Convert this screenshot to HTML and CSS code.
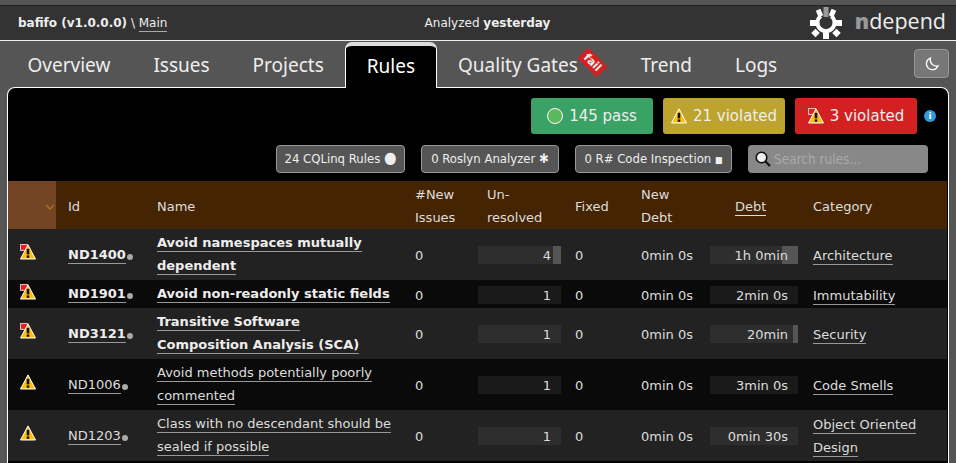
FILE: index.html
```html
<!DOCTYPE html>
<html lang="en">
<head>
    <meta charset="UTF-8">
    <meta name="viewport" content="width=device-width, initial-scale=1.0">
    <title>bafifo - Rules</title>
    <link rel="stylesheet" href="styles.css">
</head>
<body>
    <svg class="defs" width="0" height="0">
        <symbol id="warn" viewBox="0 0 16 16">
            <path d="M8 0.9 L15.5 15 H0.5 Z" fill="#ffc107" stroke="#fff" stroke-width="1" stroke-linejoin="round"/>
            <rect x="6.7" y="4.8" width="2.6" height="5.6" fill="#111"/>
            <rect x="6.7" y="11.4" width="2.6" height="2.4" fill="#111"/>
        </symbol>
        <symbol id="warn-flag" viewBox="0 0 16 16">
            <path d="M0.4 0.4 H7.6 V6.4 L0.4 6.4 Z" fill="#ee1c25" stroke="#fff" stroke-width="0.8"/>
            <path d="M8 0.9 L15.5 15 H0.5 Z" fill="#ffc107" stroke="#fff" stroke-width="1" stroke-linejoin="round"/>
            <rect x="6.7" y="4.8" width="2.6" height="5.6" fill="#111"/>
            <rect x="6.7" y="11.4" width="2.6" height="2.4" fill="#111"/>
        </symbol>
    </svg>

    <header class="topbar">
        <div class="project"><b>bafifo (v1.0.0.0)</b> \ <a href="#">Main</a></div>
        <div class="analyzed">Analyzed <b>yesterday</b></div>
        <div class="logo">
            <svg width="32" height="32" viewBox="1 0 32 32">
                <g fill="#fff">
                    <path d="M10.6 7.4 A10.5 10.5 0 1 0 23.4 7.4 L20.96 10.57 A6.5 6.5 0 1 1 13.04 10.57 Z"/>
                    <rect x="8" y="2.5" width="5" height="7" transform="rotate(-24 10.5 6)"/>
                    <rect x="21" y="2.5" width="5" height="7" transform="rotate(24 23.5 6)"/>
                    <rect x="0.5" y="13" width="7" height="6"/>
                    <rect x="26.5" y="13" width="7" height="6"/>
                    <rect x="3.5" y="23" width="6" height="6" transform="rotate(-45 6.5 26)"/>
                    <rect x="24.5" y="23" width="6" height="6" transform="rotate(45 27.5 26)"/>
                    <rect x="14" y="26" width="6" height="6"/>
                </g>
                <rect x="14.5" y="0" width="5" height="10" fill="#999"/>
            </svg>
            <span class="logo-text"><span class="logo-n">n</span>depend</span>
        </div>
    </header>

    <nav class="tabs">
        <a class="tab" href="#">Overview</a>
        <a class="tab" href="#">Issues</a>
        <a class="tab" href="#">Projects</a>
        <a class="tab active" href="#">Rules</a>
        <a class="tab gates" href="#">Quality Gates<span class="ribbon">fail</span></a>
        <a class="tab" href="#">Trend</a>
        <a class="tab" href="#">Logs</a>
        <button class="theme" type="button">
            <svg width="16" height="16" viewBox="0 0 16 16"><path d="M6.5 2 A6 6 0 1 0 14 9.8 A6.2 6.2 0 0 1 6.5 2 Z" fill="none" stroke="#fff" stroke-width="1.3"/></svg>
        </button>
    </nav>

    <main class="panel">
        <div class="status-row">
            <a class="status pass" href="#"><span class="dot-pass"></span>145 pass</a>
            <a class="status warned" href="#"><svg width="16" height="16"><use href="#warn"/></svg>21 violated</a>
            <a class="status failed" href="#"><svg width="16" height="16"><use href="#warn-flag"/></svg>3 violated</a>
            <span class="info">i</span>
        </div>
        <div class="filter-row">
            <button class="filter f-cqlinq" type="button">24 CQLinq Rules <span class="mark big">●</span></button>
            <button class="filter f-roslyn" type="button">0 Roslyn Analyzer <span class="mark">✱</span></button>
            <button class="filter f-resharper" type="button">0 R# Code Inspection <span class="mark small">■</span></button>
            <label class="search">
                <svg width="18" height="18" viewBox="0 0 18 18"><circle cx="7.5" cy="7.5" r="5.3" fill="#eee" stroke="#111" stroke-width="1.6"/><path d="M11.5 11.5 L16 16" stroke="#111" stroke-width="2.2"/></svg>
                <input type="text" placeholder="Search rules...">
            </label>
        </div>
        <table class="rules">
            <colgroup>
                <col class="c-icon"><col class="c-id"><col class="c-name"><col class="c-new"><col class="c-unres"><col class="c-fixed"><col class="c-newdebt"><col class="c-debt"><col class="c-cat">
            </colgroup>
            <thead>
                <tr>
                    <th class="sorted"><svg width="10" height="6" viewBox="0 0 10 6"><path d="M1 1 L5 5 L9 1" fill="none" stroke="#b5701f" stroke-width="1.4"/></svg></th>
                    <th>Id</th>
                    <th>Name</th>
                    <th>#New<br>Issues</th>
                    <th>Un-<br>resolved</th>
                    <th>Fixed</th>
                    <th>New<br>Debt</th>
                    <th class="th-debt"><a href="#">Debt</a></th>
                    <th>Category</th>
                </tr>
            </thead>
            <tbody>
                <tr class="crit">
                    <td class="ic"><svg width="16" height="16"><use href="#warn-flag"/></svg></td>
                    <td class="id"><a href="#">ND1400</a><i></i></td>
                    <td class="name"><a href="#">Avoid namespaces mutually dependent</a></td>
                    <td>0</td>
                    <td class="bar-cell unres"><div class="bar"><div class="fill" style="width:8px"></div><span>4</span></div></td>
                    <td>0</td>
                    <td>0min 0s</td>
                    <td class="bar-cell"><div class="bar"><div class="fill" style="width:16px"></div><span>1h 0min</span></div></td>
                    <td><a href="#">Architecture</a></td>
                </tr>
                <tr class="crit short">
                    <td class="ic"><svg width="16" height="16"><use href="#warn-flag"/></svg></td>
                    <td class="id"><a href="#">ND1901</a><i></i></td>
                    <td class="name"><a href="#">Avoid non-readonly static fields</a></td>
                    <td>0</td>
                    <td class="bar-cell unres"><div class="bar"><span>1</span></div></td>
                    <td>0</td>
                    <td>0min 0s</td>
                    <td class="bar-cell"><div class="bar"><span>2min 0s</span></div></td>
                    <td><a href="#">Immutability</a></td>
                </tr>
                <tr class="crit">
                    <td class="ic"><svg width="16" height="16"><use href="#warn-flag"/></svg></td>
                    <td class="id"><a href="#">ND3121</a><i></i></td>
                    <td class="name"><a href="#">Transitive Software Composition Analysis (SCA)</a></td>
                    <td>0</td>
                    <td class="bar-cell unres"><div class="bar"><span>1</span></div></td>
                    <td>0</td>
                    <td>0min 0s</td>
                    <td class="bar-cell"><div class="bar"><div class="fill" style="width:5px"></div><span>20min</span></div></td>
                    <td><a href="#">Security</a></td>
                </tr>
                <tr>
                    <td class="ic"><svg width="16" height="16"><use href="#warn"/></svg></td>
                    <td class="id"><a href="#">ND1006</a><i></i></td>
                    <td class="name"><a href="#">Avoid methods potentially poorly commented</a></td>
                    <td>0</td>
                    <td class="bar-cell unres"><div class="bar"><span>1</span></div></td>
                    <td>0</td>
                    <td>0min 0s</td>
                    <td class="bar-cell"><div class="bar"><span>3min 0s</span></div></td>
                    <td><a href="#">Code Smells</a></td>
                </tr>
                <tr>
                    <td class="ic"><svg width="16" height="16"><use href="#warn"/></svg></td>
                    <td class="id"><a href="#">ND1203</a><i></i></td>
                    <td class="name"><a href="#">Class with no descendant should be sealed if possible</a></td>
                    <td>0</td>
                    <td class="bar-cell unres"><div class="bar"><span>1</span></div></td>
                    <td>0</td>
                    <td>0min 0s</td>
                    <td class="bar-cell"><div class="bar"><span>0min 30s</span></div></td>
                    <td><a href="#">Object Oriented Design</a></td>
                </tr>
            </tbody>
        </table>
    </main>
</body>
</html>
```

FILE: styles.css
```css
html, body {
    height: 100%;
    overflow: hidden;
}
body {
    margin: 0;
    padding-top: 5px;
    box-sizing: border-box;
    display: flex;
    flex-direction: column;
    font-family: "DejaVu Sans", sans-serif;
    font-size: 13px;
    color: #ddd;
    background: #555;
}
.defs {
    position: absolute;
}
a {
    color: inherit;
    text-decoration: none;
}
.topbar {
    height: 36px;
    flex: none;
    box-sizing: border-box;
    display: grid;
    grid-template-columns: 1fr auto 1fr;
    align-items: center;
    padding: 0 18px;
    background: #333;
    border-top: 1px solid #222;
    border-bottom: 1px solid #eee;
    font-size: 12px;
    color: #eee;
}
.topbar .project a {
    border-bottom: 1px solid #aaa;
    padding-bottom: 1px;
}
.analyzed {
    margin-left: 19px;
}
.logo {
    justify-self: end;
    display: flex;
    align-items: center;
    gap: 13px;
    margin-right: -8px;
}
.logo-text {
    font-family: "Open Sans", sans-serif;
    font-size: 21.5px;
    line-height: 26px;
    padding-bottom: 5px;
    color: #eee;
}
.logo-n {
    font-weight: 800;
    color: #999;
}
.tabs {
    height: 47px;
    flex: none;
    display: flex;
    align-items: flex-end;
    padding: 0 7px 0 6px;
    box-sizing: border-box;
    margin-bottom: -1px;
    position: relative;
}
.tab {
    height: 45px;
    box-sizing: border-box;
    padding: 7px 21.5px 0;
    font-family: "Noto Sans", sans-serif;
    font-size: 19px;
    line-height: 30px;
    color: #eee;
}
.tab.active {
    background: #000;
    color: #fff;
    position: relative;
    z-index: 2;
    height: 46px;
    border: 1px solid #fff;
    border-top: 4px solid #ddd;
    border-bottom: 0;
    border-radius: 7px 7px 0 0;
    padding: 5px 20.5px 0;
}
.gates {
    position: relative;
    margin-right: 20px;
}
.ribbon {
    position: absolute;
    right: -7px;
    top: 12px;
    width: 27px;
    height: 15px;
    background: #d32121;
    color: #eee;
    font-family: "DejaVu Sans", sans-serif;
    font-size: 11px;
    font-weight: bold;
    line-height: 15px;
    text-align: center;
    transform: rotate(45deg);
}
.theme {
    margin-left: auto;
    align-self: flex-start;
    margin-top: 8px;
    width: 35px;
    height: 29px;
    display: flex;
    align-items: center;
    justify-content: center;
    background: #777;
    border: 1px solid #999;
    border-radius: 4px;
    padding: 0;
}
.panel {
    flex: 1;
    min-height: 0;
    overflow: hidden;
    margin: 0 7px;
    background: #000;
    border-top: 1px solid #fff;
    border-left: 1px solid #fff;
    border-right: 1px solid #fff;
    border-radius: 8px 8px 0 0;
    position: relative;
    z-index: 1;
}
.status-row {
    display: flex;
    justify-content: flex-end;
    align-items: center;
    gap: 10px;
    padding: 10px 12px 0 0;
}
.status {
    width: 122px;
    height: 36px;
    display: flex;
    align-items: center;
    justify-content: center;
    gap: 6px;
    border-radius: 3px;
    font-size: 15px;
    color: #eee;
}
.pass { background: #3ba265; }
.warned { background: #bda42e; }
.failed { background: #d32121; }
.dot-pass {
    width: 14px;
    height: 14px;
    border-radius: 50%;
    background: #5cb85c;
    border: 1px solid #fff;
}
.info {
    width: 12px;
    height: 12px;
    margin-left: -3px;
    border-radius: 50%;
    background: #3498db;
    color: #fff;
    font-size: 9px;
    font-weight: bold;
    line-height: 12px;
    text-align: center;
}
.filter-row {
    display: flex;
    justify-content: flex-end;
    gap: 16px;
    padding: 11px 20px 8px 0;
}
.filter {
    height: 28px;
    padding: 0 0 2px;
    background: #555;
    border: 1px solid #999;
    border-radius: 4px;
    color: #eee;
    font-family: "DejaVu Sans Condensed", "DejaVu Sans", sans-serif;
    font-stretch: condensed;
    font-size: 13px;
}
.f-cqlinq { width: 129px; }
.f-roslyn { width: 138px; }
.f-resharper { width: 157px; }
.mark {
    font-size: 13px;
    line-height: 1;
}
.mark.big {
    font-size: 16px;
}
.mark.small {
    font-size: 9px;
}
.search {
    width: 180px;
    height: 28px;
    display: flex;
    align-items: center;
    gap: 2px;
    padding-left: 6px;
    box-sizing: border-box;
    background: #888;
    border-radius: 4px;
}
.search input {
    flex: 1;
    min-width: 0;
    background: transparent;
    border: 0;
    outline: 0;
    padding: 0;
    color: #eee;
    font-family: "DejaVu Sans Condensed", "DejaVu Sans", sans-serif;
    font-size: 13.5px;
}
.search input::placeholder {
    color: #aaa;
}
.rules {
    width: 939px;
    table-layout: fixed;
    border-collapse: collapse;
    line-height: 23px;
}
.c-icon { width: 48px; }
.c-id { width: 89px; }
.c-name { width: 258px; }
.c-new { width: 72px; }
.c-unres { width: 88px; }
.c-fixed { width: 66px; }
.c-newdebt { width: 81px; }
.c-debt { width: 91px; }
.rules th {
    height: 48px;
    padding: 2px 0 0 12px;
    box-sizing: border-box;
    background: #452403;
    text-align: left;
    font-weight: normal;
    color: #ddd;
}
.rules th.sorted {
    background: #744524;
    text-align: right;
    padding: 0 1px 0 0;
}
.rules th.th-debt {
    padding-left: 25px;
}
.rules th a {
    border-bottom: 1px solid #ddd;
    padding-bottom: 1px;
}
.rules td {
    padding: 3px 12px 2px;
    vertical-align: middle;
    background: #222;
}
.rules .short td {
    padding: 4px 12px 1px;
}
.rules td.name, .rules .short td.name {
    padding: 2px 8px 3px 12px;
}
.rules tbody tr:nth-child(even) td {
    background: #0a0a0a;
}
.rules td a {
    border-bottom: 1px solid #999;
    padding-bottom: 1px;
}
.crit td:nth-child(2), .crit td:nth-child(3) {
    font-weight: bold;
    color: #eee;
}
.rules td.ic, .rules .short td.ic {
    padding: 0 0 5px 12px;
    line-height: 0;
}
.rules td.id, .rules .short td.id {
    padding: 2px 12px 3px;
    white-space: nowrap;
}
.id i {
    display: inline-block;
    width: 6px;
    height: 6px;
    margin-left: 1px;
    border-radius: 50%;
    background: #aaa;
    vertical-align: -1px;
}
.rules td.bar-cell, .rules .short td.bar-cell {
    padding: 3px 3px 2px 0;
}
.rules td.unres, .rules .short td.unres {
    padding: 3px 2px 2px 3px;
}
.bar {
    position: relative;
    height: 18px;
    line-height: 20px;
    background: #2e2e2e;
    text-align: right;
}
tbody tr:nth-child(even) .bar {
    background: #1a1a1a;
}
.bar span {
    position: relative;
    padding-right: 10px;
}
.fill {
    position: absolute;
    top: 0;
    right: 0;
    height: 100%;
    background: #555;
}
```
